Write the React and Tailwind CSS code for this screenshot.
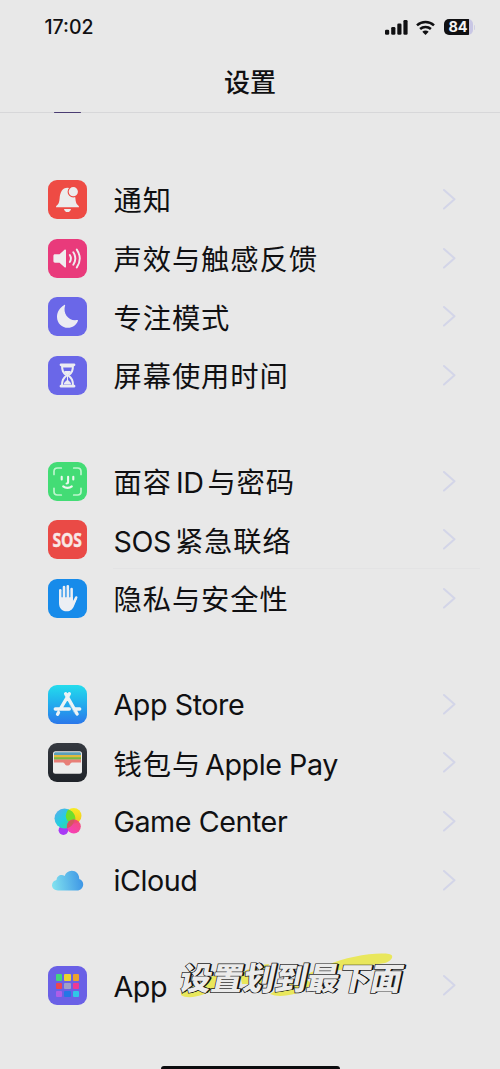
import React from 'react';

function Tile({ className, children }) {
    return (
        <svg viewBox="0 0 39 39" className={`w-[39px] h-[39px] rounded-[9px] block ${className}`}>
            {children}
        </svg>
    );
}

function BellIcon() {
    return (
        <Tile className="bg-[#ee4b44]">
            <path d="M8 27.200c0-.8.5-1.300 1.300-2.100 1.500-1.500 2-3.300 2.300-6.600.5-6 2.600-10.700 7.900-10.700 5.200 0 7.400 4.700 7.900 10.700.3 3.300.8 5.100 2.300 6.600.8.8 1.300 1.300 1.300 2.100z" fill="#ececec" />
            <path d="M16 29h7c-.3 1.900-1.700 3.100-3.500 3.100S16.300 30.900 16 29z" fill="#ececec" />
            <circle cx="25.300" cy="11.700" r="5.700" fill="#ee4b44" />
            <circle cx="25.300" cy="11.700" r="4.600" fill="#ececec" />
        </Tile>
    );
}

function SoundIcon() {
    return (
        <Tile className="bg-[#e93a7b]">
            <path d="M7 15.300h4.500l5-4.600c.7-.6 1.500-.3 1.500.6v16.400c0 .9-.8 1.200-1.500.6l-5-4.600H7c-1 0-1.600-.6-1.600-1.600v-5.200c0-1 .6-1.600 1.600-1.600z" fill="#f0ecee" />
            <g fill="none" stroke="#f0ecee" strokeWidth="1.900" strokeLinecap="round">
                <path d="M21.800 16c1.400 2.200 1.400 4.800 0 7" />
                <path d="M25.300 13.300c2.500 3.800 2.500 8.600 0 12.400" />
                <path d="M28.800 10.600c3.700 5.500 3.700 12.300 0 17.800" />
            </g>
        </Tile>
    );
}

function MoonIcon() {
    return (
        <Tile className="bg-[#6a67e8]">
            <path d="M17.100 8.500c-2.600 8.200 3.700 16 12 14.600.7-.1 1.100.3.8.9C28.200 28 24.600 30.800 20 30.800 14 30.800 9 26 9 19.900c0-5 3-9.400 7.300-11.900.6-.3 1-.1.800.5z" fill="#ececf2" />
        </Tile>
    );
}

function HourglassIcon() {
    return (
        <Tile className="bg-[#6a67e8]">
            <g fill="none" stroke="#ececf2" strokeWidth="2" strokeLinecap="round" strokeLinejoin="round">
                <path d="M13 8.800h13M13 30.200h13" strokeWidth="2.800" />
                <path d="M14 9c0 5.700 1 7.500 4.500 10.500C15 22.500 14 24.300 14 30M25 9c0 5.700-1 7.500-4.500 10.500C24 22.500 25 24.300 25 30" />
            </g>
            <path d="M16.300 15h6.400c-.5 1.700-1.500 3-3.200 4.300-1.700-1.300-2.700-2.600-3.200-4.300zM15.700 28.500c.2-2 1.600-2.800 3.800-5 2.200 2.200 3.600 3 3.800 5z" fill="#ececf2" />
            <path d="M14.500 9h10v2.500h-10zM19 18h1v7h-1z" fill="#ececf2" />
        </Tile>
    );
}

function FaceIcon() {
    return (
        <Tile className="bg-[#43dc75]">
            <g fill="none" stroke="#bdf5cd" strokeWidth="1.700" strokeLinecap="round" strokeLinejoin="round">
                <path d="M6 12.500V9.500C6 7.300 7.300 6 9.500 6h3.800M25.700 6h3.800C31.700 6 33 7.300 33 9.500v3M33 26.300v3.200c0 2.200-1.300 3.500-3.500 3.500h-3.800M13.300 33H9.500C7.300 33 6 31.700 6 29.500v-3.200" />
            </g>
            <g fill="none" stroke="#ecf8ef" strokeWidth="2.100" strokeLinecap="round" strokeLinejoin="round">
                <path d="M13.700 14.800v2.600M25.300 14.800v2.600M20.100 14.800v5.500c0 .8-.5 1.200-1.500 1.200" />
                <path d="M15.200 24.400c2.400 2 6.200 2 8.600 0" />
            </g>
        </Tile>
    );
}

function SosIcon() {
    return (
        <div className="w-[39px] h-[39px] rounded-[9px] bg-[#ea4a46] flex items-center justify-center">
            <span className="font-['Open_Sans',sans-serif] font-bold text-[19.500px] leading-none tracking-[-0.3px] text-[#f8e8e6] scale-x-[0.8] [-webkit-text-stroke:0.4px_#f8e8e6]">SOS</span>
        </div>
    );
}

function HandIcon() {
    return (
        <Tile className="bg-[#178bea]">
            <g fill="none" stroke="#eceff4" strokeWidth="2.600" strokeLinecap="round">
                <path d="M12.300 23V11.300M16 20V8M19.800 20V7.300M23.600 21V10M24.500 26l3.700-7.500" />
            </g>
            <path d="M11 18H24.900v4.500l2-2.500 2.200-.8-2.700 6.800c-1.500 4-3.600 6.300-7.600 6.300-5 0-7.800-3.200-7.800-8.300z" fill="#eceff4" />
            <path d="M14.150 12v6.500M17.900 10v8.500M21.700 11v7.500" stroke="#5fadee" strokeWidth=".9" />
        </Tile>
    );
}

function AppStoreIcon() {
    return (
        <Tile className="bg-linear-to-b from-[#25dcec] to-[#2b77ea]">
            <g fill="none" stroke="#ecf3f6" strokeWidth="3.400" strokeLinecap="round">
                <path d="M21.300 8.800l-9 15.200M17.700 8.800l11.400 20.200M7.300 24h14M27.300 24h4.400M10.500 27.500l-.9 1.700" />
            </g>
            <path d="M21.600 19.300l5.200 9.200" stroke="#9bd0ee" strokeWidth=".8" />
        </Tile>
    );
}

function WalletIcon() {
    return (
        <Tile className="bg-linear-to-b from-[#353940] to-[#20242a]">
            <rect x="5" y="8.300" width="29" height="22.500" rx="2.500" fill="#ececec" />
            <path d="M6 12.400v-1.600c0-1 .6-1.600 1.600-1.600h23.800c1 0 1.600.6 1.600 1.600v1.600z" fill="#5a9eb8" />
            <path d="M6 12h27v3.500H6z" fill="#e2b93e" />
            <path d="M6 14.200h27v2.600H6z" fill="#77b944" />
            <path d="M6 16.500h27v3h-8.500c-1.300 0-1.700.5-2.300 1.500-1.200 2-4.200 2-5.400 0-.6-1-1-1.500-2.300-1.500H6z" fill="#e87f78" />
        </Tile>
    );
}

function GameCenterIcon() {
    return (
        <Tile className="">
            <defs>
                <linearGradient id="gcBlue" x1="0" y1="0" x2="1" y2="1">
                    <stop offset="0" stopColor="#62a7ee" />
                    <stop offset=".5" stopColor="#22d0df" />
                    <stop offset="1" stopColor="#37dd83" />
                </linearGradient>
                <linearGradient id="gcYellow" x1="0" y1="0" x2="0" y2="1">
                    <stop offset="0" stopColor="#f7ec25" />
                    <stop offset="1" stopColor="#f2c51d" />
                </linearGradient>
                <linearGradient id="gcPink" x1="1" y1="0" x2="0" y2="1">
                    <stop offset="0" stopColor="#f23f62" />
                    <stop offset="1" stopColor="#f928c6" />
                </linearGradient>
            </defs>
            <circle cx="15.400" cy="28.200" r="4.800" fill="#a83af5" />
            <circle cx="25.700" cy="13.800" r="7.800" fill="url(#gcYellow)" />
            <circle cx="16.500" cy="16.500" r="10" fill="url(#gcBlue)" />
            <path d="M18.500 10.700a7.800 7.800 0 0 0 3.500 10 7.800 7.800 0 0 0 4.300.8A10 10 0 0 0 20.400 7.400a7.800 7.800 0 0 0-1.900 3.300z" fill="#70dd2b" />
            <circle cx="25.800" cy="24.500" r="7" fill="url(#gcPink)" opacity=".9" />
            <path d="M19.600 27.600a7 7 0 0 1 3.400-9.500 7 7 0 0 1 3.200-.6 10 10 0 0 1-7.100 8.700z" fill="#d2595c" />
        </Tile>
    );
}

function CloudIcon() {
    return (
        <Tile className="">
            <defs>
                <linearGradient id="cloud" x1="0" y1=".5" x2="1" y2=".4">
                    <stop offset="0" stopColor="#80e1ef" />
                    <stop offset="1" stopColor="#3c94e5" />
                </linearGradient>
            </defs>
            <path d="M10 29.500c-3.400 0-6-2.100-6-5.200 0-2.700 1.900-4.800 4.500-5.300.1-3 2.500-5 5.100-5 1.200 0 2.200.4 3 1 1.200-3.100 3.700-5.200 7.100-5.200 4.400 0 7.500 3.300 7.500 7.700v.5c2.400.7 4 2.600 4 5.200 0 3.600-2.600 6.300-6.200 6.300z" fill="url(#cloud)" />
        </Tile>
    );
}

const appDots = ['#43d67c', '#edd42f', '#eda22f', '#ed4551', '#a2a0c6', '#ed3a95', '#ae5ee7', '#2377e5', '#2fc7e7'];

function AppsIcon() {
    return (
        <div className="w-[39px] h-[39px] rounded-[9px] bg-[#6a60e6] flex items-center justify-center">
            <div className="grid grid-cols-3 gap-[2px]">
                {appDots.map((color) => (
                    <span key={color} className="w-[6.300px] h-[6.300px] rounded-[1px]" style={{ backgroundColor: color }} />
                ))}
            </div>
        </div>
    );
}

// zh / en parts are set apart since each script has its own face and tracking
const groups = [
    [
        { icon: BellIcon, label: [{ zh: '通知' }] },
        { icon: SoundIcon, label: [{ zh: '声效与触感反馈' }] },
        { icon: MoonIcon, label: [{ zh: '专注模式' }] },
        { icon: HourglassIcon, label: [{ zh: '屏幕使用时间' }] },
    ],
    [
        { icon: FaceIcon, label: [{ zh: '面容' }, { en: 'ID' }, { zh: '与密码' }] },
        { icon: SosIcon, label: [{ en: 'SOS' }, { zh: '紧急联络' }], divider: true },
        { icon: HandIcon, label: [{ zh: '隐私与安全性' }] },
    ],
    [
        { icon: AppStoreIcon, label: [{ en: 'App Store' }] },
        { icon: WalletIcon, label: [{ zh: '钱包与' }, { en: 'Apple Pay' }] },
        { icon: GameCenterIcon, label: [{ en: 'Game Center' }] },
        { icon: CloudIcon, label: [{ en: 'iCloud' }] },
    ],
    [{ icon: AppsIcon, label: [{ en: 'App' }] }],
];

function Row({ icon: Icon, label, divider }) {
    const zhOnly = label.every((part) => part.zh);

    return (
        <div className="h-[58.700px] pl-12 flex items-center">
            <Icon />
            <div className={`ml-[26px] mr-5 h-full flex-1 flex items-center justify-between border-b ${divider ? 'border-[#e3e3e4]' : 'border-transparent'}`}>
                <div className={`pl-[0.500px] flex items-baseline gap-[4px] text-[#101012] whitespace-nowrap leading-[40px] ${zhOnly ? 'pt-px' : 'pt-[2.500px]'}`}>
                    {label.map((part) => part.zh
                        ? <span key={part.zh} className="font-['Noto_Sans_CJK_SC',sans-serif] text-[28.300px] tracking-[0.900px]">{part.zh}</span>
                        : <span key={part.en} className="font-['Inter',sans-serif] text-[28.700px] tracking-[-0.450px]">{part.en}</span>
                    )}
                </div>
                <svg viewBox="0 0 14 22" className="w-[14px] h-[22px] mr-[24px]" fill="none" stroke="#d3d5e8" strokeWidth="2" strokeLinecap="round" strokeLinejoin="round">
                    <path d="M2 2L12.500 11.300L2 20.600" />
                </svg>
            </div>
        </div>
    );
}

function StatusBar() {
    return (
        <div className="h-[54px] pl-[44.500px] pr-[25px] flex items-center justify-between text-[#101012]">
            <span className="font-['Inter',sans-serif] font-medium text-[19.500px] leading-none pt-[2px]">17:02</span>
            <div className="flex items-center gap-[8.500px]">
                <svg viewBox="0 0 23 15" className="w-[23px] h-[15px]" fill="currentColor">
                    <rect x="0" y="9.700" width="4.200" height="5" rx="1.300" />
                    <rect x="6.200" y="7" width="4.200" height="7.700" rx="1.300" />
                    <rect x="12.300" y="3.500" width="4.200" height="11.200" rx="1.300" />
                    <rect x="18.400" y="0" width="4.200" height="14.700" rx="1.300" />
                </svg>
                <svg viewBox="0 0 19 15" className="w-[19px] h-[15px]" fill="none" stroke="currentColor" strokeWidth="2.500">
                    <path d="M1 5.300c4.800-4.500 12.200-4.500 17 0" />
                    <path d="M4.100 9c3.100-2.800 7.700-2.800 10.800 0" />
                    <path d="M6.300 11.700c1.900-1.600 4.500-1.600 6.400 0L9.500 15z" fill="currentColor" stroke="none" />
                </svg>
                <div className="flex items-center gap-[1px]">
                    <div className="w-[29px] h-4 rounded-[5px] flex items-center justify-center bg-linear-to-r from-[#101012] from-85% to-[#c9c7e5] to-85%">
                        <span className="font-['Inter',sans-serif] font-bold text-[14.500px] leading-none text-[#f4f4f4]">84</span>
                    </div>
                    <span className="w-[1.500px] h-[5px] rounded-r-full bg-[#d0cfe4]" />
                </div>
            </div>
        </div>
    );
}

function Caption() {
    return (
        <div className="absolute left-[178px] top-[950px] w-[230px] h-[50px]">
            <svg viewBox="0 0 230 50" className="absolute inset-0 w-full h-full" fill="#e9e75c">
                <path d="M150 15c17-8 47-13 61-11 6 1 3 7-4 9-23 3-50 8-82 13zM92 44c12-8 24-12 37-14l5 4-9 7c-10 4-24 7-33 3zM3 43l28-16 21-5-9 14C30 44 11 51 3 45zM62 24c9-6 19-9 29-10l-8 20H64z" />
            </svg>
            <span className="absolute left-[3px] top-[4px] -skew-x-12 whitespace-nowrap font-['Noto_Sans_CJK_SC',sans-serif] font-black text-[31.500px] leading-[44px] tracking-[0.300px] text-[#ebebeb] [-webkit-text-stroke:1.400px_#1c1c1c] [paint-order:stroke_fill] [text-shadow:1px_0_0_#111,2px_0_0_#111]">设置划到最下面</span>
        </div>
    );
}

export default function App() {
    return (
        <div className="relative w-[500px] h-[1069px] overflow-hidden bg-[#e8e8e8] flex flex-col">
            <header className="h-[113px] shrink-0 border-b border-[#d7d7d9] relative">
                <StatusBar />
                <h1 className="text-center font-['Noto_Sans_CJK_SC',sans-serif] font-medium text-[26px] leading-[54px] text-[#101012]">设置</h1>
                <span className="absolute left-[54px] -bottom-px w-[27px] h-[1.500px] rounded-full bg-[#4a3c72]" />
            </header>

            <main className="pt-[57px] flex flex-col gap-[47px] shrink-0">
                {groups.map((rows, i) => (
                    <section key={i}>
                        {rows.map((row, j) => <Row key={j} {...row} />)}
                    </section>
                ))}
            </main>

            <Caption />

            {/* Home indicator */}
            <div className="absolute left-[161px] top-[1066px] w-[179px] h-[6px] rounded-full bg-[#0c0c0e]" />
        </div>
    );
}
